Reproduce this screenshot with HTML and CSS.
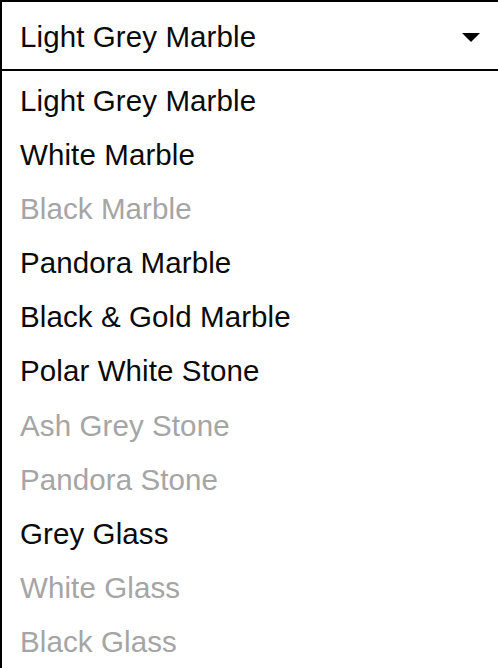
FILE: index.html
```html
<!DOCTYPE html>
<html lang="en">
<head>
    <meta charset="UTF-8">
    <meta name="viewport" content="width=device-width, initial-scale=1.0">
    <title>Finish picker</title>
    <link rel="stylesheet" href="styles.css">
</head>
<body>
    <div class="picker">
        <div class="picker-head">
            <span class="picker-value">Light Grey Marble</span>
            <svg class="picker-arrow" width="20" height="10" viewBox="0 0 20 10">
                <polygon points="1,0 19,0 10,9" fill="#000"></polygon>
            </svg>
        </div>
        <ul class="picker-list">
            <li>Light Grey Marble</li>
            <li>White Marble</li>
            <li class="off">Black Marble</li>
            <li>Pandora Marble</li>
            <li>Black &amp; Gold Marble</li>
            <li>Polar White Stone</li>
            <li class="off">Ash Grey Stone</li>
            <li class="off">Pandora Stone</li>
            <li>Grey Glass</li>
            <li class="off">White Glass</li>
            <li class="off">Black Glass</li>
        </ul>
    </div>
</body>
</html>
```

FILE: styles.css
```css
body {
    margin: 0;
    background-color: #fff;
    font-family: 'Liberation Sans', Arial, sans-serif;
    font-size: 29.5px;
    letter-spacing: 0.1px;
    color: #0a0a0a;
    overflow: hidden;
}

.picker {
    border-left: 2px solid #000;
    border-top: 2px solid #000;
    height: 666px;
}

.picker-head {
    display: flex;
    align-items: center;
    justify-content: space-between;
    padding: 19px 17px 16px 18px;
    line-height: 32px;
    border-bottom: 2px solid #000;
}

.picker-arrow {
    display: block;
    margin-top: 2px;
}

.picker-list {
    list-style: none;
    margin: 0;
    padding: 3px 0 0 0;
}

.picker-list li {
    padding: 0 18px;
    line-height: 54.1px;
    cursor: pointer;
}

.picker-list li.off {
    color: #a5a5a5;
    cursor: default;
}
```
